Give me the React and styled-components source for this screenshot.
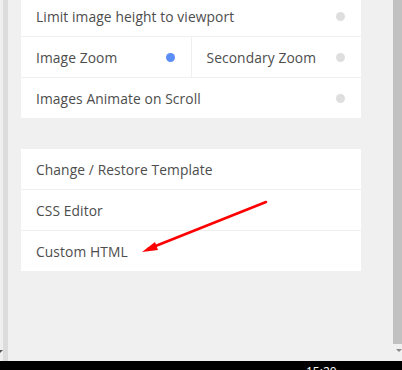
import React from "react";
import styled, { createGlobalStyle } from "styled-components";

const Global = createGlobalStyle`
  html, body { margin: 0; padding: 0; background: #f0f0f0; }
  body { font-family: "Segoe UI", "Open Sans", "Noto Sans", sans-serif; }
  #root { width: 402px; height: 370px; overflow: hidden; }
`;

const Screen = styled.div`
  display: flex;
  flex-direction: column;
  width: 402px;
  height: 370px;
`;

const Main = styled.div`
  flex: 1;
  display: flex;
  min-height: 0;
`;

const LeftEdge = styled.div`
  width: 8px;
  display: flex;
  flex-direction: column;
  justify-content: flex-end;
  background: linear-gradient(to right, #efefef 0 3px, #dcdcdc 3px 8px);
`;

const LeftNotch = styled.div`
  width: 0;
  height: 0;
  margin-bottom: 8px;
  border-top: 3px solid #555;
  border-right: 3px solid transparent;
`;

const Content = styled.div`
  position: relative;
  flex: 1;
  padding: 0 32px 0 13px;
  overflow: hidden;
  display: flex;
  flex-direction: column;
  gap: 31px;
`;

const Card = styled.div`
  background: #fff;
  display: flex;
  flex-direction: column;
  margin-top: ${(p) => p.$offset || 0}px;
`;

const Row = styled.div`
  display: flex;
  height: 40px;
  border-top: ${(p) => (p.$first ? "none" : "1px solid #efefef")};
`;

const Cell = styled.div`
  flex: 1;
  display: flex;
  align-items: center;
  justify-content: space-between;
  padding: 0 16px 0 15px;
  font-size: 13.8px;
  color: #4d4d4d;
  letter-spacing: 0.1px;
  & + & {
    border-left: 1px solid #efefef;
  }
`;

const Dot = styled.span`
  width: 9px;
  height: 9px;
  border-radius: 50%;
  background: ${(p) => (p.$on ? "#5b8df6" : "#dedede")};
  flex: none;
`;

const Arrow = styled.svg`
  position: absolute;
  left: 0;
  top: 0;
  pointer-events: none;
`;

const Scrollbar = styled.div`
  width: 9px;
  display: flex;
  flex-direction: column;
  align-items: center;
  background: #f0f0f0;
`;

const Thumb = styled.div`
  width: 9px;
  height: 344px;
  background: #c1c1c1;
`;

const ScrollArrow = styled.div`
  margin-top: 5px;
  margin-left: 2px;
  width: 0;
  height: 0;
  border-left: 3px solid transparent;
  border-right: 3px solid transparent;
  border-top: 3px solid #8a8a8a;
`;

const Taskbar = styled.div`
  height: 9px;
  background: #000;
  position: relative;
  overflow: hidden;
`;

const Clock = styled.span`
  position: absolute;
  left: 306px;
  top: 4px;
  color: #fff;
  font-family: "Segoe UI", "Open Sans", sans-serif;
  font-size: 12px;
  line-height: 14px;
`;

const Toggle = ({ label, on }) => (
  <Cell>
    <span>{label}</span>
    {on !== undefined && <Dot $on={on} />}
  </Cell>
);

export default function App() {
  return (
    <>
      <Global />
      <Screen>
        <Main>
          <LeftEdge>
            <LeftNotch />
          </LeftEdge>
          <Content>
            <Card $offset={-4}>
              <Row $first>
                <Toggle label="Limit image height to viewport" on={false} />
              </Row>
              <Row>
                <Toggle label="Image Zoom" on={true} />
                <Toggle label="Secondary Zoom" on={false} />
              </Row>
              <Row>
                <Toggle label="Images Animate on Scroll" on={false} />
              </Row>
            </Card>
            <Card>
              <Row $first>
                <Toggle label="Change / Restore Template" />
              </Row>
              <Row>
                <Toggle label="CSS Editor" />
              </Row>
              <Row>
                <Toggle label="Custom HTML" />
              </Row>
            </Card>
            <Arrow width="372" height="361" viewBox="0 0 372 361">
              <line x1="258" y1="202" x2="140" y2="249" stroke="#ff0000" strokeWidth="2.5" strokeLinecap="round" />
              <polygon points="134,252 147,242 150,250" fill="#ff0000" />
            </Arrow>
          </Content>
          <Scrollbar>
            <Thumb />
            <ScrollArrow />
          </Scrollbar>
        </Main>
        <Taskbar>
          <Clock>15:20</Clock>
        </Taskbar>
      </Screen>
    </>
  );
}
